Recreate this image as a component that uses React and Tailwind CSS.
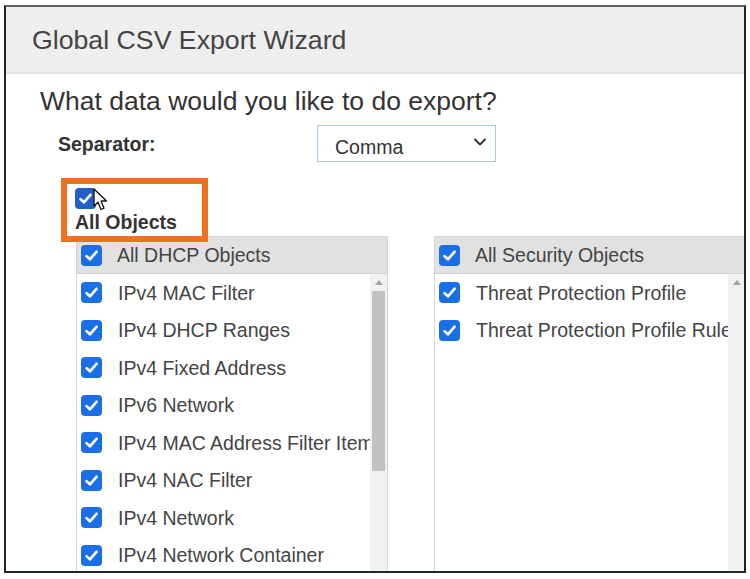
import { ChevronDown } from "lucide-react";

const dhcpItems = [
  "IPv4 MAC Filter",
  "IPv4 DHCP Ranges",
  "IPv4 Fixed Address",
  "IPv6 Network",
  "IPv4 MAC Address Filter Item",
  "IPv4 NAC Filter",
  "IPv4 Network",
  "IPv4 Network Container",
];

const securityItems = ["Threat Protection Profile", "Threat Protection Profile Rule"];

function Check({ dark }) {
  return (
    <span
      className={`w-[21px] h-[21px] shrink-0 rounded-[4px] flex items-center justify-center ${
        dark ? "bg-[#2360c4]" : "bg-[#1a6fe6]"
      }`}
    >
      <svg width="17" height="17" viewBox="0 0 16 16" fill="none">
        <path d="M3.3 8.6 L6.5 11.6 L12.7 4.5" stroke="white" strokeWidth="2.5" strokeLinecap="round" strokeLinejoin="round" />
      </svg>
    </span>
  );
}

function Panel({ title, items, thumb }) {
  return (
    <div className="w-[312px] h-[400px] shrink-0 border border-[#d4d4d4] flex flex-col">
      {/* header row */}
      <div className="h-[37px] bg-[#e1e1e1] border-b border-[#d0d0d0] flex items-center pl-[4px] gap-[15px] text-[19.5px] leading-[22px] text-[#444]">
        <Check />
        <span className="whitespace-nowrap">{title}</span>
      </div>
      <div className="flex flex-1">
        <div className="flex-1 overflow-hidden">
          {items.map((item) => (
            <div key={item} className="h-[37.5px] flex items-center pl-[4px] gap-[16px] text-[19.5px] leading-[22px] text-[#444]">
              <Check />
              <span className="whitespace-nowrap">{item}</span>
            </div>
          ))}
        </div>
        {/* scrollbar */}
        <div className="w-[17px] bg-[#f1f1f1] flex flex-col items-center">
          <div className="h-[17px] flex items-center justify-center">
            <svg width="8" height="5" viewBox="0 0 8 5">
              <polygon points="0,5 4,0 8,5" fill="#a3a3a3" />
            </svg>
          </div>
          {thumb && <div className="w-[13px] h-[180px] bg-[#c1c1c1]" />}
        </div>
      </div>
    </div>
  );
}

export default function App() {
  return (
    <div className="w-[750px] h-[579px] bg-white pt-[5px] pl-[4px] font-['Liberation_Sans',Arial,sans-serif]">
      <div className="relative w-[742px] h-[568px] border-2 border-[#1e272c] border-t-[#5b6166] overflow-hidden bg-white">
        {/* Title bar */}
        <div className="h-[67px] bg-[#eeeeee] border-b-2 border-[#e3e3e3] flex items-center pl-[26px] text-[26.7px] leading-[30px] text-[#444]">
          Global CSV Export Wizard
        </div>

        <div className="pl-[34px] mt-[12px] text-[26.5px] leading-[30px] text-[#333]">
          What data would you like to do export?
        </div>

        {/* Separator */}
        <div className="flex items-center mt-[9px] h-[37px]">
          <div className="w-[311px] pl-[52px] text-[19.5px] leading-[22px] font-bold text-[#333]">Separator:</div>
          <div className="w-[179px] h-[37px] border-[1.5px] border-[#a8cbea] flex items-center justify-between pl-[17px] pr-[5px]">
            <span className="mt-[7px] text-[19.5px] leading-[22px] text-[#333]">Comma</span>
            <ChevronDown className="w-[20px] h-[20px] mb-[4px] text-[#333]" strokeWidth={2.2} />
          </div>
        </div>

        {/* All Objects */}
        <div className="mt-[26px] pl-[69px]">
          <Check dark />
          <div className="mt-[2px] text-[19.5px] leading-[22px] font-bold text-[#333]">All Objects</div>
        </div>

        <div className="flex gap-[46px] pl-[70px] mt-[3px]">
          <Panel title="All DHCP Objects" items={dhcpItems} thumb />
          <Panel title="All Security Objects" items={securityItems} />
        </div>

        {/* annotation box */}
        <div className="absolute left-[55px] top-[171px] w-[147px] h-[64px] border-[6px] border-[#f26f21]" />

        {/* mouse cursor */}
        <svg className="absolute left-[87px] top-[181px]" width="16" height="24" viewBox="0 0 16 24">
          <path d="M1 1 L1 18 L5 14.2 L8 21.5 L11 20.2 L8.1 13 L13.5 13 Z" fill="white" stroke="#111" strokeWidth="1.3" strokeLinejoin="round" />
        </svg>
      </div>
    </div>
  );
}
